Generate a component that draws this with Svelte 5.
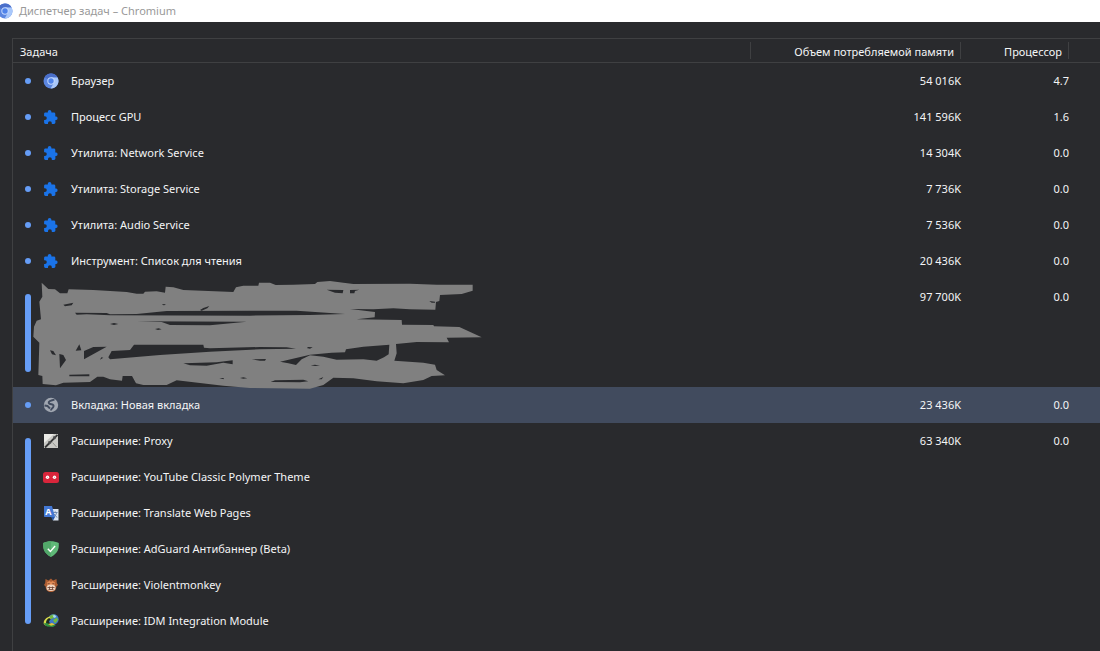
<script lang="ts">
	type Task = { icon: string; name: string };
	type Group = { tasks: Task[]; memory: string; cpu: string; selected?: boolean; hidden?: boolean };

	const groups: Group[] = [
		{ tasks: [{ icon: 'chromium', name: 'Браузер' }], memory: '54 016K', cpu: '4.7' },
		{ tasks: [{ icon: 'puzzle', name: 'Процесс GPU' }], memory: '141 596K', cpu: '1.6' },
		{ tasks: [{ icon: 'puzzle', name: 'Утилита: Network Service' }], memory: '14 304K', cpu: '0.0' },
		{ tasks: [{ icon: 'puzzle', name: 'Утилита: Storage Service' }], memory: '7 736K', cpu: '0.0' },
		{ tasks: [{ icon: 'puzzle', name: 'Утилита: Audio Service' }], memory: '7 536K', cpu: '0.0' },
		{ tasks: [{ icon: 'puzzle', name: 'Инструмент: Список для чтения' }], memory: '20 436K', cpu: '0.0' },
		{
			tasks: [
				{ icon: '', name: '' },
				{ icon: '', name: '' },
				{ icon: '', name: '' }
			],
			memory: '97 700K',
			cpu: '0.0',
			hidden: true
		},
		{ tasks: [{ icon: 'globe', name: 'Вкладка: Новая вкладка' }], memory: '23 436K', cpu: '0.0', selected: true },
		{
			tasks: [
				{ icon: 'proxy', name: 'Расширение: Proxy' },
				{ icon: 'youtube', name: 'Расширение: YouTube Classic Polymer Theme' },
				{ icon: 'translate', name: 'Расширение: Translate Web Pages' },
				{ icon: 'adguard', name: 'Расширение: AdGuard Антибаннер (Beta)' },
				{ icon: 'monkey', name: 'Расширение: Violentmonkey' },
				{ icon: 'idm', name: 'Расширение: IDM Integration Module' }
			],
			memory: '63 340K',
			cpu: '0.0'
		}
	];
</script>

{#snippet icon(name: string)}
	<svg class="icon" viewBox="0 0 16 16" aria-hidden="true">
		{#if name === 'chromium'}
			<circle cx="8" cy="8" r="7.5" fill="#5b86e0" />
			<path d="M8 8 1.5 4.2A7.5 7.5 0 0 1 14.6 4.5H8z" fill="#4a6fca" />
			<path d="M8 4.5h6.6A7.5 7.5 0 0 1 7.6 15.5L11 9.8z" fill="#a9c8fb" />
			<circle cx="8" cy="8" r="3.7" fill="#c3d8fd" />
			<circle cx="8" cy="8" r="2.7" fill="#4f83ea" />
		{:else if name === 'puzzle'}
			<path
				d="M13.2 7.600h-.9V4.900c0-.8-.6-1.400-1.400-1.400H8.400v-.8a1.800 1.800 0 0 0-3.600 0v.8H2.400C1.600 3.500 1.100 4.100 1.100 4.900v2.300h.8a1.900 1.900 0 0 1 0 3.800h-.8v2.500c0 .8.6 1.400 1.400 1.400H5v-.8a1.900 1.900 0 0 1 3.800 0v.8H11c.8 0 1.400-.6 1.400-1.400v-2.400h.8a1.800 1.800 0 0 0 0-3.500z"
				fill="#1a73e8"
			/>
		{:else if name === 'globe'}
			<circle cx="8" cy="8" r="7.2" fill="#a1a7b1" />
			<path
				d="M11.5 2.500C9.500 3.500 7 3.200 5.800 5c-.6 1.600 1 2 2.700 2.300 2 .4 2.500 1.500 1.800 2.700-.8 1.400-2.300 1.500-2.300 3.500M1.500 8.500l3 .5 2.500 2.500"
				fill="none"
				stroke="#414b5e"
				stroke-width="1.9"
			/>
		{:else if name === 'proxy'}
			<path d="M1 1h14v14H1z" fill="#c9c9c5" />
			<path d="M1 1h10L1 10z" fill="#ebebe7" />
			<path d="M14.500 1.800 5.500 11l-3.500 3.500" fill="none" stroke="#343536" stroke-width="1.800" />
			<path d="M5 8.500 7.500 8 8.500 10 6 11.500zM10 3.500 13 3l-.5 3-2 .5z" fill="#4b4c4d" />
			<path d="m9.500 9.500 4 4.500" stroke="#92938f" />
		{:else if name === 'youtube'}
			<rect x="0" y="3" width="16" height="11" rx="2.5" fill="#d9253b" />
			<circle cx="4.5" cy="8.2" r="1.700" fill="#fff" />
			<circle cx="11.5" cy="8.2" r="1.700" fill="#fff" />
			<circle cx="4.5" cy="8.2" r=".5" fill="#c98f97" />
			<circle cx="11.5" cy="8.2" r=".5" fill="#c98f97" />
		{:else if name === 'translate'}
			<path d="M7 4h8.500v11.500H10z" fill="#dce4f1" />
			<path d="M10 7.500h4.500M12.200 6.300v1.200M13.700 7.500c-.5 2-1.500 3.500-3 4.500M11 9l3 3.500" fill="none" stroke="#6f87b1" />
			<path d="M1 1h8l3 11H2c-.6 0-1-.4-1-1z" fill="#4478d4" />
			<path d="M8 12h4l-2 3.500z" fill="#2857a8" />
			<text x="2.2" y="9.8" font-family="Open Sans, sans-serif" font-size="9" font-weight="700" fill="#fff">A</text>
		{:else if name === 'adguard'}
			<path d="M8 .3c2.500 0 5.500.6 7.800 1.700 0 4.800.4 9.500-7.800 14C-.2 11.500.2 6.800.2 2 2.500.9 5.500.3 8 .3z" fill="#5fb978" />
			<path d="M8 .3V16C-.2 11.500.2 6.800.2 2 2.500.9 5.500.3 8 .3z" fill="#52a86a" />
			<path d="m4.800 7.700 2.600 2.800 4.700-5.500" fill="none" stroke="#fff" stroke-width="1.4" />
		{:else if name === 'monkey'}
			<path d="m2.500 2 3 1.500L8 1.500l2 2L13.500 2l.3 4 1.200 2-1.600 1.500C13.200 13.300 11 15 8 15s-5.200-1.700-5.400-5.500L1 8l1.200-2z" fill="#ad5d32" />
			<path d="M4 5.500 6.500 4 8 5l1.500-1L12 5.500 11.700 8H4.300z" fill="#e08a55" />
			<ellipse cx="8" cy="10.700" rx="4.500" ry="3.300" fill="#eed4c1" />
			<path d="M4.700 6.700h2M9.300 6.700h2M4.500 10.500h7M5.500 12.500h5M6.500 9.500v3M9.500 9.500v3" stroke="#694031" stroke-width=".8" />
		{:else if name === 'idm'}
			<circle cx="10.5" cy="6.300" r="5.200" fill="#3d78c9" />
			<path d="M6 4.500C7.500 1.500 10.500 1 12 2l-.5 2.500-3 1.500zM10 7l4-2.500 1 2.500-3 3.500z" fill="#74b83d" />
			<path d="M9.500 2.500 12 2l1.500 2-2.500 1z" fill="#a8d7f2" />
			<path d="M6.500 3.500C1.500 5.500.5 8 .8 11l1.700 1.500 2-.5C4.500 9.500 5 7.500 8 6z" fill="#d7d94b" />
			<path d="M6 5C3 7 2.500 9 3.500 11.500l3-.5C5.500 9 6 7.500 8 6z" fill="#1c2b20" />
			<path d="M.5 10.500 4 13.500l6 .5 3-2-4.500-1-2 .5L4 10z" fill="#2f9141" />
			<path d="m5 11 4-1 3 1.500-4 1.200z" fill="#e0c33b" />
		{/if}
	</svg>
{/snippet}

<div class="window">
	<header class="titlebar">
		{@render icon('chromium')}
		<h1>Диспетчер задач – Chromium</h1>
	</header>

	<main class="panel">
		<table>
			<colgroup>
				<col class="col-mark" />
				<col />
				<col class="col-memory" />
				<col class="col-cpu" />
				<col class="col-rest" />
			</colgroup>
			<thead>
				<tr>
					<th class="title" colspan="2">Задача</th>
					<th class="num">Объем потребляемой памяти</th>
					<th class="num">Процессор</th>
					<td></td>
				</tr>
			</thead>
			{#each groups as group}
				<tbody class:selected={group.selected}>
					{#each group.tasks as task, i}
						<tr>
							{#if i === 0}
								<td class="mark" rowspan={group.tasks.length}>
									<span class="bar"></span>
									{#if group.hidden}
										<svg class="scribble" viewBox="60 27 1380 333" aria-hidden="true">
											<path
												fill="#808080"
												fill-rule="evenodd"
												d="M95 38 115 57 135 58 150 70H172L176 58 250 60 350 66 380 71H400L405 65 440 64 465 68 467 50 490 52 520 60 670 66 678 52 700 47H745L747 38H780L797 45 850 44 915 42 922 36 960 33 1000 38 1030 42 1200 41 1280 44H1388V62L1355 72 1290 75 1288 93 1278 96 1276 119 1200 118 1150 115 1090 118 1020 117 1095 126 1094 142 1040 148 1175 150 1176 164 1270 165 1272 169 1348 171 1415 202 1310 203 1317 217 1220 216 1158 222 1160 250 1153 272 1240 278 1275 284 1280 300 1305 316 1265 318 1240 330 1180 340 1100 334 1030 325 970 323 940 345 900 356 720 354 640 347 500 331 470 345 400 345 378 340 366 318H338L336 332 300 328 280 320H262L240 336 160 338 138 346 98 342 97 318 85 315 88 218 70 200 72 170 80 152 93 148 88 95 97 80Z
												M160 104 190 98 185 106 165 109Z
												M195 128 290 129 300 133 380 132 470 123 720 122H860L1005 132 900 135 720 137 300 136 230 133 200 134Z
												M380 154 710 155 600 166 480 165 455 156Z
												M300 162 312 159 325 162 312 165ZM435 177 446 175 455 178 444 180ZM455 104 462 102 468 104 462 106ZM570 120 580 114 598 108 592 115 575 122Z
												M372 224H580L582 233 600 235 750 231 830 232 858 236 750 238 600 245 450 255 300 268 295 262 305 243 360 240Z
												M222 268V243L250 231 290 230ZM197 242 208 223 214 241ZM120 241 130 243 138 256 126 253ZM148 252 160 255 168 270 150 295ZM178 314 238 313V319H178ZM270 269 274 262 280 263Z
												M520 280 620 277 668 271V283L640 278 590 287 540 286ZM628 324 642 324 640 328ZM690 324 700 322 712 325 700 326ZM725 268 768 267 765 272 750 272Z
												M810 275 900 254 965 248 1005 247 1008 238 1060 230 1138 224 1136 253 1122 262 1100 272 1060 268 980 269 940 260 900 256 875 268 858 285 835 280Z
												M782 336 795 331 880 329 895 334 870 337ZM925 328 940 321 935 328ZM890 234 895 231 908 232 900 236ZM902 286 915 284 930 287 915 288Z
												M950 59 1000 60 998 70 975 68ZM1020 60 1048 59 1035 63 1033 70H1020ZM1258 93 1275 95V98H1265Z"
											/>
										</svg>
									{/if}
								</td>
							{/if}
							<td>
								<div class="task">
									{#if task.name}
										{@render icon(task.icon)}
										<span>{task.name}</span>
									{/if}
								</div>
							</td>
							<td class="num">{i === 0 ? group.memory : ''}</td>
							<td class="num">{i === 0 ? group.cpu : ''}</td>
							<td></td>
						</tr>
					{/each}
				</tbody>
			{/each}
		</table>
	</main>
</div>

<style>
	:global(body) {
		background: #292a2d;
	}
	.window {
		display: flex;
		flex-direction: column;
		min-height: 100vh;
		font-family: 'Segoe UI', 'Noto Sans', 'Open Sans', sans-serif;
		font-size: 11px;
		line-height: 16px;
		color: #f4f5f6;
		overflow: hidden;
	}
	.titlebar {
		display: flex;
		align-items: center;
		gap: 6px;
		height: 22px;
		margin-left: -3px;
		background: #fff;
		color: #999;
	}
	h1 {
		margin: 0;
		font-size: 11px;
		font-weight: 400;
	}
	.icon {
		flex: none;
		display: block;
		width: 16px;
		height: 16px;
	}
	.panel {
		flex: 1;
		margin: 16px 0 0 12px;
		border-top: 1px solid #3f4042;
		border-left: 1px solid #3f4042;
	}
	table {
		width: 100%;
		table-layout: fixed;
		border-spacing: 0;
	}
	.col-mark {
		width: 30px;
	}
	.col-memory {
		width: 210px;
	}
	.col-cpu {
		width: 108px;
	}
	.col-rest {
		width: 31px;
	}
	th,
	td {
		padding: 0;
		font-weight: 400;
		white-space: nowrap;
	}
	thead th,
	thead td {
		position: relative;
		height: 21px;
		padding-top: 2px;
		border-bottom: 1px solid #3f4042;
	}
	thead th {
		padding-left: 7px;
		padding-right: 7px;
	}
	thead th::after {
		content: '';
		position: absolute;
		top: 3px;
		right: 0;
		bottom: 3px;
		width: 1px;
		background: #3f4042;
	}
	.title {
		text-align: left;
	}
	.num {
		text-align: right;
	}
	tbody td {
		height: 36px;
	}
	.selected {
		background: #414b5e;
	}
	.mark {
		position: relative;
	}
	.bar {
		position: absolute;
		top: 15px;
		bottom: 15px;
		left: 12px;
		width: 6px;
		border-radius: 3px;
		background: #669df6;
	}
	.scribble {
		position: absolute;
		z-index: 1;
		top: 0;
		left: 17px;
		width: 460px;
		height: 111px;
	}
	.task {
		display: flex;
		align-items: center;
		gap: 12px;
	}
</style>
